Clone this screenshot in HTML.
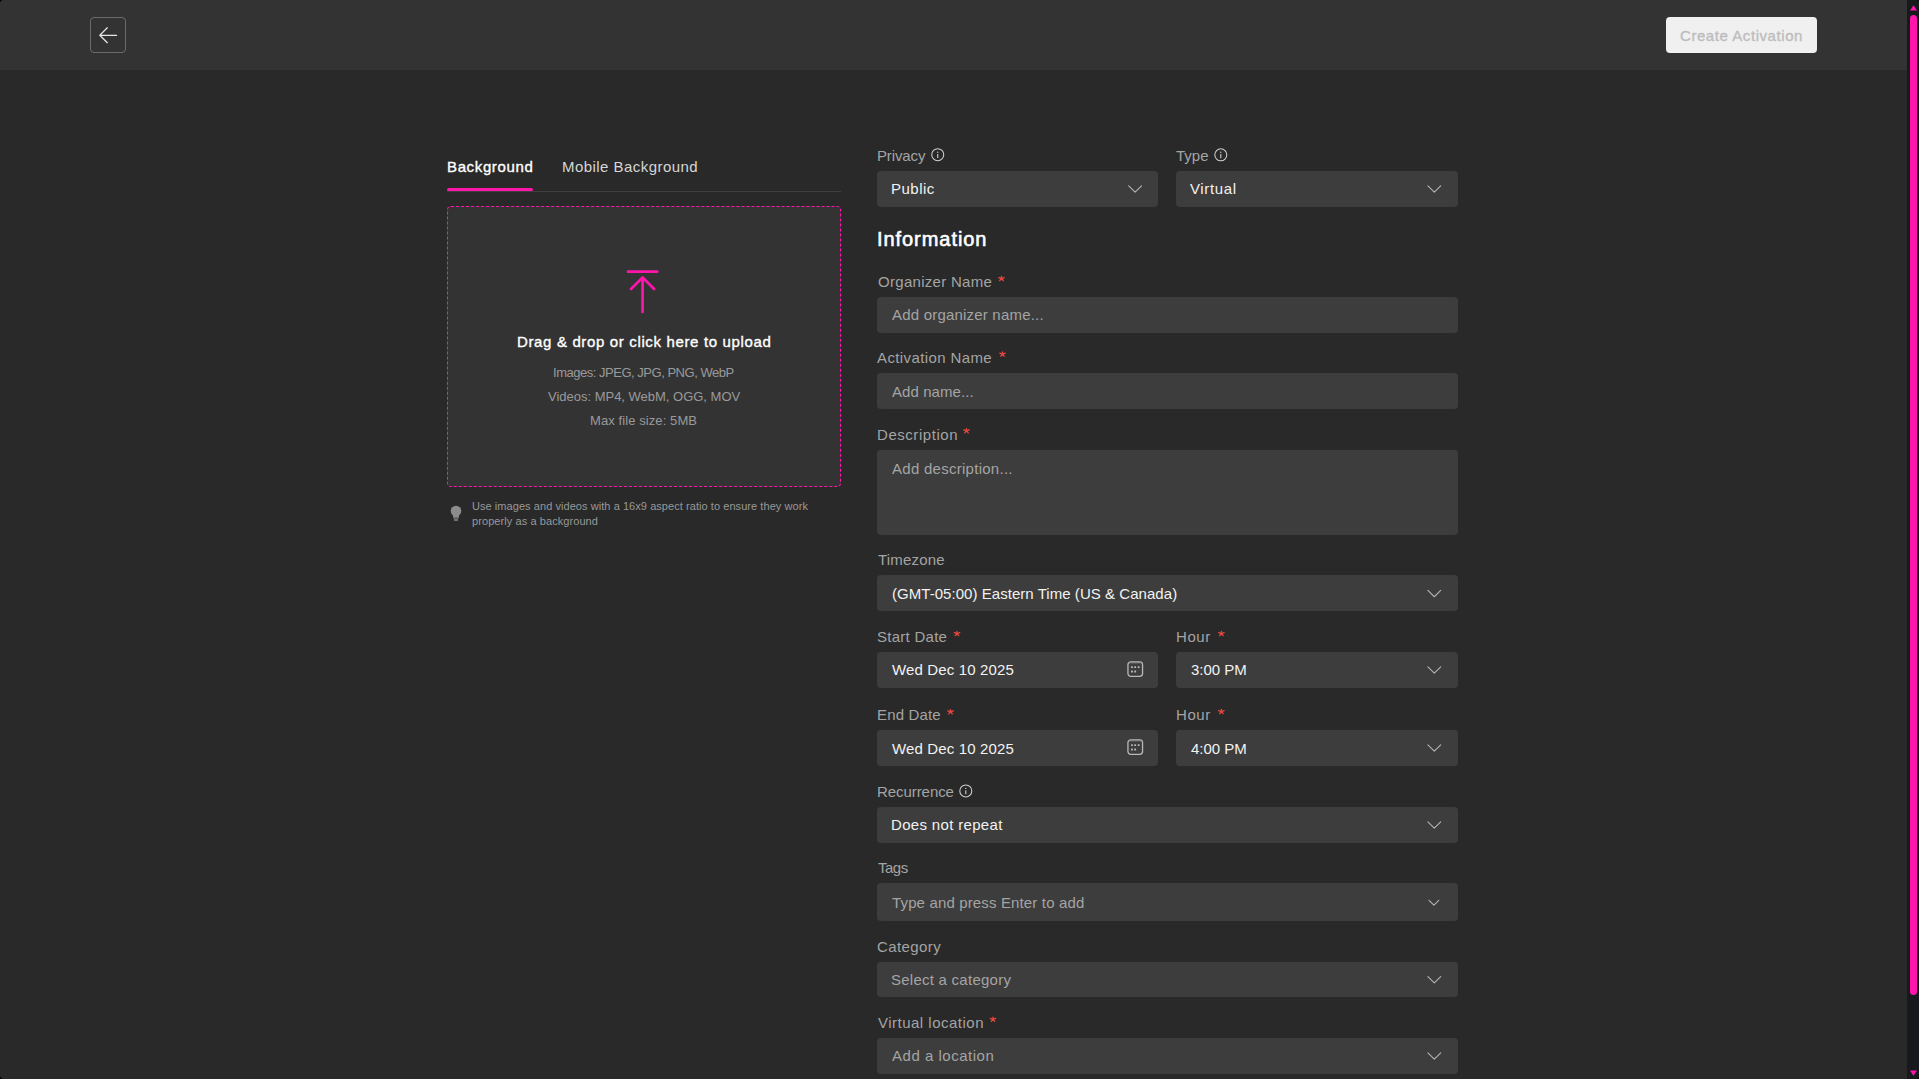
<!DOCTYPE html>
<html><head><meta charset="utf-8"><style>
html,body{margin:0;padding:0;width:1919px;height:1079px;overflow:hidden;background:#000;}
#root{position:absolute;left:0;top:0;width:1919px;height:1079px;overflow:hidden;background:#292929;border-radius:4px;}
.t{position:absolute;font-family:"Liberation Sans",sans-serif;white-space:nowrap;line-height:1;}
.b{position:absolute;}
.s{position:absolute;overflow:visible;}
</style></head><body><div id="root">
<div class="b" style="left:0px;top:0px;width:1907px;height:70px;background:#333333;border-radius:0px;"></div>
<div class="b" style="left:90px;top:17px;width:36px;height:36px;background:transparent;border-radius:4px;border:1px solid #6a6a6a;box-sizing:border-box"></div>
<svg class="s" style="left:96px;top:23px" width="24" height="24" viewBox="0 0 24 24"><path d="M11.3 4.8 L3.8 12.3 L11.3 19.7 M4 12.3 L20.6 12.3" fill="none" stroke="#e6e6e6" stroke-width="1.25" stroke-linecap="round" stroke-linejoin="round"/></svg>
<div class="b" style="left:1666px;top:17px;width:151px;height:36px;background:#f0f0f0;border-radius:4px;"></div>
<div class="t" style="left:1680.0px;top:28px;font-size:15px;font-weight:400;color:#bdbdbd;letter-spacing:0.562px;-webkit-text-stroke:0.35px #bdbdbd;">Create Activation</div>
<div class="b" style="left:1907px;top:0px;width:12px;height:1079px;background:#18191d;border-radius:0px;"></div>
<div class="b" style="left:1910px;top:15px;width:7px;height:980px;background:#ff14ac;border-radius:4px;"></div>
<svg class="s" style="left:1910px;top:5px" width="7" height="6" viewBox="0 0 7 6"><path d="M3.5 0.3 L7 5.5 L0 5.5 Z" fill="#ff14ac"/></svg>
<svg class="s" style="left:1910px;top:1070px" width="7" height="6" viewBox="0 0 7 6"><path d="M0 0.5 L7 0.5 L3.5 5.7 Z" fill="#ff14ac"/></svg>
<div class="t" style="left:447.0px;top:159px;font-size:15px;font-weight:400;color:#ffffff;letter-spacing:0.633px;-webkit-text-stroke:0.35px #ffffff;">Background</div>
<div class="t" style="left:562.0px;top:159px;font-size:15px;font-weight:400;color:#d6d6d6;letter-spacing:0.456px;">Mobile Background</div>
<div class="b" style="left:447px;top:191px;width:394px;height:1px;background:#3f3f3f;border-radius:0px;"></div>
<div class="b" style="left:447px;top:188px;width:86px;height:3px;background:#ff14ac;border-radius:1.5px;"></div>
<div class="b" style="left:447px;top:206px;width:394px;height:281px;background:#333333;border-radius:4px;border:1px dashed #ff14ac;box-sizing:border-box"></div>
<svg class="s" style="left:622px;top:265px" width="42" height="52" viewBox="0 0 42 52"><path d="M6 6.7 L35.3 6.7 M20.6 12.8 L20.6 47 M9 24 L20.6 12.5 L32.2 24" fill="none" stroke="#ff14ac" stroke-width="2.7" stroke-linecap="round" stroke-linejoin="round"/></svg>
<div class="t" style="left:517.0px;top:334px;font-size:15px;font-weight:400;color:#ffffff;letter-spacing:0.647px;-webkit-text-stroke:0.35px #ffffff;">Drag &amp; drop or click here to upload</div>
<div class="t" style="left:553.0px;top:366px;font-size:13px;font-weight:400;color:#9a9a9a;letter-spacing:-0.481px;">Images: JPEG, JPG, PNG, WebP</div>
<div class="t" style="left:548.0px;top:390px;font-size:13px;font-weight:400;color:#9a9a9a;letter-spacing:-0.010px;">Videos: MP4, WebM, OGG, MOV</div>
<div class="t" style="left:590.0px;top:414px;font-size:13px;font-weight:400;color:#9a9a9a;letter-spacing:0.088px;">Max file size: 5MB</div>
<svg class="s" style="left:449px;top:505px" width="14" height="17" viewBox="0 0 14 17"><circle cx="7" cy="6" r="5.3" fill="#8c8c8c"/><rect x="4" y="9" width="6" height="3" fill="#8c8c8c"/><rect x="4.2" y="12.3" width="5.6" height="1.3" rx="0.5" fill="#8c8c8c"/><rect x="4.8" y="14.2" width="4.4" height="1.6" rx="0.8" fill="#8c8c8c"/></svg>
<div class="t" style="left:472.0px;top:501px;font-size:11px;font-weight:400;color:#989898;letter-spacing:0.060px;">Use images and videos with a 16x9 aspect ratio to ensure they work</div>
<div class="t" style="left:472.0px;top:516px;font-size:11px;font-weight:400;color:#989898;letter-spacing:0.078px;">properly as a background</div>
<div class="t" style="left:877.0px;top:148px;font-size:15px;font-weight:400;color:#a4a4a4;letter-spacing:-0.133px;">Privacy</div>
<svg class="s" style="left:929px;top:146px" width="16" height="16" viewBox="0 0 16 16"><circle cx="8.75" cy="8.70" r="6.0" fill="none" stroke="#cfcfcf" stroke-width="1.05"/><rect x="8.20" y="8.00" width="1.1" height="4.1" rx="0.3" fill="#cfcfcf"/><circle cx="8.75" cy="6.20" r="0.7" fill="#cfcfcf"/></svg>
<div class="t" style="left:1176.0px;top:148px;font-size:15px;font-weight:400;color:#a4a4a4;letter-spacing:0.000px;">Type</div>
<svg class="s" style="left:1212px;top:146px" width="16" height="16" viewBox="0 0 16 16"><circle cx="8.80" cy="8.80" r="6.0" fill="none" stroke="#cfcfcf" stroke-width="1.05"/><rect x="8.25" y="8.10" width="1.1" height="4.1" rx="0.3" fill="#cfcfcf"/><circle cx="8.80" cy="6.30" r="0.7" fill="#cfcfcf"/></svg>
<div class="b" style="left:877px;top:171px;width:281px;height:36px;background:#3d3d3d;border-radius:4px;"></div>
<div class="t" style="left:891.0px;top:181px;font-size:15px;font-weight:400;color:#f2f2f2;letter-spacing:0.500px;">Public</div>
<svg class="s" style="left:1126px;top:180px" width="18" height="18" viewBox="0 0 18 18"><path d="M2.70 5.85 L9.10 12.15 L15.50 5.85" fill="none" stroke="#b4b4b4" stroke-width="1.1" stroke-linecap="round" stroke-linejoin="round"/></svg>
<div class="b" style="left:1176px;top:171px;width:282px;height:36px;background:#3d3d3d;border-radius:4px;"></div>
<div class="t" style="left:1190.0px;top:181px;font-size:15px;font-weight:400;color:#f2f2f2;letter-spacing:0.633px;">Virtual</div>
<svg class="s" style="left:1425px;top:180px" width="18" height="18" viewBox="0 0 18 18"><path d="M2.90 5.85 L9.30 12.15 L15.70 5.85" fill="none" stroke="#b4b4b4" stroke-width="1.1" stroke-linecap="round" stroke-linejoin="round"/></svg>
<div class="t" style="left:877.0px;top:229px;font-size:20px;font-weight:400;color:#ffffff;letter-spacing:0.940px;-webkit-text-stroke:0.6px #ffffff;">Information</div>
<div class="t" style="left:878.0px;top:274px;font-size:15px;font-weight:400;color:#a4a4a4;letter-spacing:0.292px;">Organizer Name</div>
<svg class="s" style="left:995px;top:272px" width="12" height="12" viewBox="0 0 12 12"><path d="M6.50 6.60 L6.50 4.40 M6.50 6.60 L9.23 5.61 M6.50 6.60 L3.77 5.61 M6.50 6.60 L8.24 8.53 M6.50 6.60 L4.76 8.53 " fill="none" stroke="#e8473f" stroke-width="1.35" stroke-linecap="round"/></svg>
<div class="b" style="left:877px;top:297px;width:581px;height:36px;background:#3d3d3d;border-radius:4px;"></div>
<div class="t" style="left:892.0px;top:307px;font-size:15px;font-weight:400;color:#a4a4a4;letter-spacing:0.200px;">Add organizer name...</div>
<div class="t" style="left:877.0px;top:350px;font-size:15px;font-weight:400;color:#a4a4a4;letter-spacing:0.393px;">Activation Name</div>
<svg class="s" style="left:996px;top:348px" width="12" height="12" viewBox="0 0 12 12"><path d="M6.50 6.20 L6.50 4.00 M6.50 6.20 L9.23 5.21 M6.50 6.20 L3.77 5.21 M6.50 6.20 L8.24 8.13 M6.50 6.20 L4.76 8.13 " fill="none" stroke="#e8473f" stroke-width="1.35" stroke-linecap="round"/></svg>
<div class="b" style="left:877px;top:373px;width:581px;height:36px;background:#3d3d3d;border-radius:4px;"></div>
<div class="t" style="left:892.0px;top:384px;font-size:15px;font-weight:400;color:#a4a4a4;letter-spacing:0.080px;">Add name...</div>
<div class="t" style="left:877.0px;top:427px;font-size:15px;font-weight:400;color:#a4a4a4;letter-spacing:0.550px;">Description</div>
<svg class="s" style="left:960px;top:424px" width="12" height="12" viewBox="0 0 12 12"><path d="M6.50 6.90 L6.50 4.70 M6.50 6.90 L9.23 5.91 M6.50 6.90 L3.77 5.91 M6.50 6.90 L8.24 8.83 M6.50 6.90 L4.76 8.83 " fill="none" stroke="#e8473f" stroke-width="1.35" stroke-linecap="round"/></svg>
<div class="b" style="left:877px;top:450px;width:581px;height:85px;background:#3d3d3d;border-radius:4px;"></div>
<div class="t" style="left:892.0px;top:461px;font-size:15px;font-weight:400;color:#a4a4a4;letter-spacing:0.271px;">Add description...</div>
<div class="t" style="left:878.0px;top:552px;font-size:15px;font-weight:400;color:#a4a4a4;letter-spacing:0.200px;">Timezone</div>
<div class="b" style="left:877px;top:575px;width:581px;height:36px;background:#3d3d3d;border-radius:4px;"></div>
<div class="t" style="left:892.0px;top:586px;font-size:15px;font-weight:400;color:#f2f2f2;letter-spacing:0.046px;">(GMT-05:00) Eastern Time (US &amp; Canada)</div>
<svg class="s" style="left:1425px;top:584px" width="18" height="18" viewBox="0 0 18 18"><path d="M2.90 6.45 L9.30 12.75 L15.70 6.45" fill="none" stroke="#b4b4b4" stroke-width="1.1" stroke-linecap="round" stroke-linejoin="round"/></svg>
<div class="t" style="left:877.0px;top:629px;font-size:15px;font-weight:400;color:#a4a4a4;letter-spacing:0.267px;">Start Date</div>
<svg class="s" style="left:951px;top:627px" width="12" height="12" viewBox="0 0 12 12"><path d="M6.00 6.70 L6.00 4.50 M6.00 6.70 L8.73 5.71 M6.00 6.70 L3.27 5.71 M6.00 6.70 L7.74 8.63 M6.00 6.70 L4.26 8.63 " fill="none" stroke="#e8473f" stroke-width="1.35" stroke-linecap="round"/></svg>
<div class="t" style="left:1176.0px;top:629px;font-size:15px;font-weight:400;color:#a4a4a4;letter-spacing:0.567px;">Hour</div>
<svg class="s" style="left:1215px;top:627px" width="12" height="12" viewBox="0 0 12 12"><path d="M6.40 6.70 L6.40 4.50 M6.40 6.70 L9.13 5.71 M6.40 6.70 L3.67 5.71 M6.40 6.70 L8.14 8.63 M6.40 6.70 L4.66 8.63 " fill="none" stroke="#e8473f" stroke-width="1.35" stroke-linecap="round"/></svg>
<div class="b" style="left:877px;top:652px;width:281px;height:36px;background:#3d3d3d;border-radius:4px;"></div>
<div class="t" style="left:892.0px;top:662px;font-size:15px;font-weight:400;color:#f2f2f2;letter-spacing:0.150px;">Wed Dec 10 2025</div>
<svg class="s" style="left:1127px;top:661px" width="17" height="17" viewBox="0 0 17 17"><rect x="0.95" y="0.9" width="14.6" height="14.5" rx="2.8" fill="none" stroke="#b8b8b8" stroke-width="1.3"/><line x1="2.2" y1="1.7" x2="14.3" y2="1.7" stroke="#8a8a8a" stroke-width="1.2"/><rect x="4" y="5.2" width="1.9" height="1.9" rx="0.5" fill="#b8b8b8"/><rect x="7.2" y="5.2" width="1.9" height="1.9" rx="0.5" fill="#b8b8b8"/><rect x="10.7" y="5.2" width="1.9" height="1.9" rx="0.5" fill="#b8b8b8"/><rect x="4" y="9.6" width="1.9" height="1.9" rx="0.5" fill="#b8b8b8"/><rect x="7.2" y="9.6" width="1.9" height="1.9" rx="0.5" fill="#b8b8b8"/></svg>
<div class="b" style="left:1176px;top:652px;width:282px;height:36px;background:#3d3d3d;border-radius:4px;"></div>
<div class="t" style="left:1191.0px;top:662px;font-size:15px;font-weight:400;color:#f2f2f2;letter-spacing:-0.010px;">3:00 PM</div>
<svg class="s" style="left:1425px;top:661px" width="18" height="18" viewBox="0 0 18 18"><path d="M2.90 5.85 L9.30 12.15 L15.70 5.85" fill="none" stroke="#b4b4b4" stroke-width="1.1" stroke-linecap="round" stroke-linejoin="round"/></svg>
<div class="t" style="left:877.0px;top:707px;font-size:15px;font-weight:400;color:#a4a4a4;letter-spacing:0.157px;">End Date</div>
<svg class="s" style="left:944px;top:705px" width="12" height="12" viewBox="0 0 12 12"><path d="M6.50 6.80 L6.50 4.60 M6.50 6.80 L9.23 5.81 M6.50 6.80 L3.77 5.81 M6.50 6.80 L8.24 8.73 M6.50 6.80 L4.76 8.73 " fill="none" stroke="#e8473f" stroke-width="1.35" stroke-linecap="round"/></svg>
<div class="t" style="left:1176.0px;top:707px;font-size:15px;font-weight:400;color:#a4a4a4;letter-spacing:0.567px;">Hour</div>
<svg class="s" style="left:1215px;top:705px" width="12" height="12" viewBox="0 0 12 12"><path d="M6.40 6.70 L6.40 4.50 M6.40 6.70 L9.13 5.71 M6.40 6.70 L3.67 5.71 M6.40 6.70 L8.14 8.63 M6.40 6.70 L4.66 8.63 " fill="none" stroke="#e8473f" stroke-width="1.35" stroke-linecap="round"/></svg>
<div class="b" style="left:877px;top:730px;width:281px;height:36px;background:#3d3d3d;border-radius:4px;"></div>
<div class="t" style="left:892.0px;top:741px;font-size:15px;font-weight:400;color:#f2f2f2;letter-spacing:0.150px;">Wed Dec 10 2025</div>
<svg class="s" style="left:1127px;top:739px" width="17" height="17" viewBox="0 0 17 17"><rect x="0.95" y="0.9" width="14.6" height="14.5" rx="2.8" fill="none" stroke="#b8b8b8" stroke-width="1.3"/><line x1="2.2" y1="1.7" x2="14.3" y2="1.7" stroke="#8a8a8a" stroke-width="1.2"/><rect x="4" y="5.2" width="1.9" height="1.9" rx="0.5" fill="#b8b8b8"/><rect x="7.2" y="5.2" width="1.9" height="1.9" rx="0.5" fill="#b8b8b8"/><rect x="10.7" y="5.2" width="1.9" height="1.9" rx="0.5" fill="#b8b8b8"/><rect x="4" y="9.6" width="1.9" height="1.9" rx="0.5" fill="#b8b8b8"/><rect x="7.2" y="9.6" width="1.9" height="1.9" rx="0.5" fill="#b8b8b8"/></svg>
<div class="b" style="left:1176px;top:730px;width:282px;height:36px;background:#3d3d3d;border-radius:4px;"></div>
<div class="t" style="left:1191.0px;top:741px;font-size:15px;font-weight:400;color:#f2f2f2;letter-spacing:-0.010px;">4:00 PM</div>
<svg class="s" style="left:1425px;top:739px" width="18" height="18" viewBox="0 0 18 18"><path d="M2.90 5.85 L9.30 12.15 L15.70 5.85" fill="none" stroke="#b4b4b4" stroke-width="1.1" stroke-linecap="round" stroke-linejoin="round"/></svg>
<div class="t" style="left:877.0px;top:784px;font-size:15px;font-weight:400;color:#a4a4a4;letter-spacing:-0.067px;">Recurrence</div>
<svg class="s" style="left:957px;top:782px" width="16" height="16" viewBox="0 0 16 16"><circle cx="8.80" cy="8.90" r="6.0" fill="none" stroke="#cfcfcf" stroke-width="1.05"/><rect x="8.25" y="8.20" width="1.1" height="4.1" rx="0.3" fill="#cfcfcf"/><circle cx="8.80" cy="6.40" r="0.7" fill="#cfcfcf"/></svg>
<div class="b" style="left:877px;top:807px;width:581px;height:36px;background:#3d3d3d;border-radius:4px;"></div>
<div class="t" style="left:891.0px;top:817px;font-size:15px;font-weight:400;color:#f2f2f2;letter-spacing:0.329px;">Does not repeat</div>
<svg class="s" style="left:1425px;top:816px" width="18" height="18" viewBox="0 0 18 18"><path d="M2.90 5.85 L9.30 12.15 L15.70 5.85" fill="none" stroke="#b4b4b4" stroke-width="1.1" stroke-linecap="round" stroke-linejoin="round"/></svg>
<div class="t" style="left:878.0px;top:860px;font-size:15px;font-weight:400;color:#a4a4a4;letter-spacing:-0.500px;">Tags</div>
<div class="b" style="left:877px;top:883px;width:581px;height:38px;background:#3d3d3d;border-radius:4px;"></div>
<div class="t" style="left:892.0px;top:895px;font-size:15px;font-weight:400;color:#a4a4a4;letter-spacing:0.146px;">Type and press Enter to add</div>
<svg class="s" style="left:1424px;top:893px" width="18" height="18" viewBox="0 0 18 18"><path d="M5.00 7.40 L9.90 12.20 L14.80 7.40" fill="none" stroke="#b4b4b4" stroke-width="1.1" stroke-linecap="round" stroke-linejoin="round"/></svg>
<div class="t" style="left:877.0px;top:939px;font-size:15px;font-weight:400;color:#a4a4a4;letter-spacing:0.414px;">Category</div>
<div class="b" style="left:877px;top:962px;width:581px;height:35px;background:#3d3d3d;border-radius:4px;"></div>
<div class="t" style="left:891.0px;top:972px;font-size:15px;font-weight:400;color:#a4a4a4;letter-spacing:0.250px;">Select a category</div>
<svg class="s" style="left:1425px;top:970px" width="18" height="18" viewBox="0 0 18 18"><path d="M2.90 6.55 L9.30 12.85 L15.70 6.55" fill="none" stroke="#b4b4b4" stroke-width="1.1" stroke-linecap="round" stroke-linejoin="round"/></svg>
<div class="t" style="left:878.0px;top:1015px;font-size:15px;font-weight:400;color:#a4a4a4;letter-spacing:0.493px;">Virtual location</div>
<svg class="s" style="left:987px;top:1013px" width="12" height="12" viewBox="0 0 12 12"><path d="M6.00 6.40 L6.00 4.20 M6.00 6.40 L8.73 5.41 M6.00 6.40 L3.27 5.41 M6.00 6.40 L7.74 8.33 M6.00 6.40 L4.26 8.33 " fill="none" stroke="#e8473f" stroke-width="1.35" stroke-linecap="round"/></svg>
<div class="b" style="left:877px;top:1038px;width:581px;height:36px;background:#3d3d3d;border-radius:4px;"></div>
<div class="t" style="left:892.0px;top:1048px;font-size:15px;font-weight:400;color:#a4a4a4;letter-spacing:0.515px;">Add a location</div>
<svg class="s" style="left:1425px;top:1047px" width="18" height="18" viewBox="0 0 18 18"><path d="M2.90 5.85 L9.30 12.15 L15.70 5.85" fill="none" stroke="#b4b4b4" stroke-width="1.1" stroke-linecap="round" stroke-linejoin="round"/></svg>
</div></body></html>
